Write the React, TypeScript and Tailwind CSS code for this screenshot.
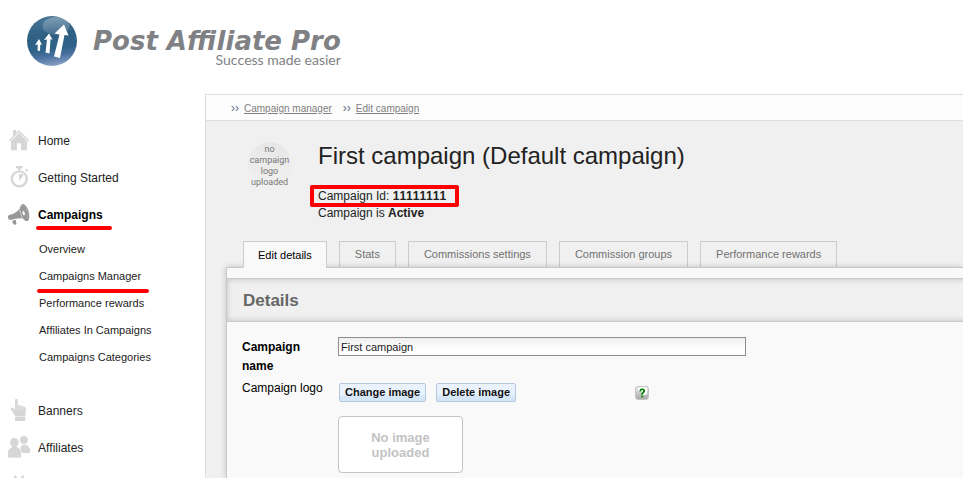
import type { ReactNode } from "react";

const GREY = "#d6d6d6";

function LogoMark() {
  return (
    <svg className="h-[52px] w-[52px] shrink-0" viewBox="0 0 52 52" aria-hidden="true">
      <defs>
        <linearGradient id="ball" x1="0.4" y1="0" x2="0.55" y2="1">
          <stop offset="0" stopColor="#4a7796" />
          <stop offset="0.35" stopColor="#306083" />
          <stop offset="0.65" stopColor="#2f6288" />
          <stop offset="0.8" stopColor="#4a71a0" />
          <stop offset="1" stopColor="#8aa3c4" />
        </linearGradient>
        <linearGradient id="shine" x1="0" y1="0" x2="0" y2="1">
          <stop offset="0" stopColor="#ffffff" stopOpacity="0.3" />
          <stop offset="1" stopColor="#ffffff" stopOpacity="0.1" />
        </linearGradient>
      </defs>
      <circle cx="26" cy="26" r="25" fill="url(#ball)" />
      <ellipse cx="30" cy="11" rx="13.500" ry="9" fill="url(#shine)" />
      <g fill="#ffffff">
        <path d="M13 24 L16 29.800 L14.300 29.600 L14 36 L11.500 35.500 L11.800 29.600 L9 30 Z" />
        <path d="M23 18.500 L26.500 24.500 L24.500 24.300 L23.500 38.500 L19.500 37.500 L21 24.500 L18 25 Z" />
        <path d="M38 9.500 L42.500 20.500 L38.500 20 L34 43 L28 41.500 L33.500 19.500 L28.500 18.500 Z" />
      </g>
    </svg>
  );
}

function Icon({ children, color = GREY }: { children: ReactNode; color?: string }) {
  return (
    <svg className="mb-[2px] h-6 w-6 shrink-0" viewBox="0 0 24 24" fill={color} aria-hidden="true">
      {children}
    </svg>
  );
}

const HomeIcon = () => (
  <Icon>
    <path d="M6 2h3.200v4L6 9z" />
    <path d="M12 2 1.700 12.600l.9.900L12 4l9.400 9.500.9-.9z" />
    <path d="M12 4.900 4 13v9.300h6v-7h4v7h6V13z" />
  </Icon>
);

const StopwatchIcon = () => (
  <Icon>
    <path d="M9 1h6.500v2.200h-2v2H11v-2H9z" />
    <path d="m18 5.200 1.800-1.600 1.500 1.700-1.600 1.500z" />
    <circle cx="12.300" cy="13.800" r="7.500" fill="none" stroke={GREY} strokeWidth="2.300" />
    <path d="M12 9h3.500l1 1.600-4.500 5.400z" />
  </Icon>
);

const MegaphoneIcon = () => (
  <Icon color="#979797">
    <path d="M.8 14.500 2 13c4.500-.8 7.500-2.500 10.500-6l3.300 9.500c-4.500-.6-8 .2-11.800 1.500l-2.500-.7z" />
    <path d="M12.500 7c.5-3 2-4.700 3.600-5 2.600.5 4.600 4 5.700 8 .9 3.800.6 8-1.200 9-1.600.5-3.300-.8-4.800-2.500z" />
    <path d="m5.500 18.500 3.200-.8.800 4.300-1.800.9-2.200-2z" />
    <path d="M13.800 7c.3-2 1.300-3.500 2.400-3.600 3.600 1.100 5.600 9.200 4 13.600" fill="none" stroke="#b4b4b4" strokeWidth="0.600" />
    <ellipse cx="16.700" cy="11.300" rx="1.100" ry="2.300" fill="#ffffff" transform="rotate(-14 16.700 11.300)" />
    <path d="m12.500 8 2.900 8.600" stroke="#dcdcdc" strokeWidth="0.600" />
  </Icon>
);

const HandIcon = () => (
  <Icon>
    <path d="M8 2c0-1.300 2.700-1.300 2.700 0v5.500c.8-.9 2.300-.6 2.600.4.900-.7 2.200-.2 2.400.8 1-.6 3 0 3 1.300v5.500L18 18.500H8.500L6.600 15.500 4 11.500c-.4-1.500.6-2.500 2-1.700L8 12z" />
    <path d="M8 19h10.300v4H8z" />
    <path d="M10.800 7.500V12M13.300 8v4.200M15.700 9v3.500" stroke="#f4f4f4" strokeWidth="0.500" />
  </Icon>
);

const PeopleIcon = () => (
  <Icon>
    <circle cx="17" cy="5" r="3.900" />
    <path d="M13.500 14c-.5-2 1.500-3.500 2.500-4.200h2.500c2.500.8 4.500 2.700 4.500 5.200v3h-8z" />
    <path d="M7.300 3a4.400 4.400 0 0 1 2.500 8l-.2 1c3 1.100 4.400 3 4.400 6v4.500H1V18c0-3 1.400-4.900 4.200-6L5 11a4.400 4.400 0 0 1 2.300-8z" />
  </Icon>
);

const CogIcon = () => (
  <Icon>
    <path d="m6.500 6.500 1-3h1.500l1.500 3h3l1.500-3h1.500l1 3 3.500 2v10h-18v-10z" />
  </Icon>
);

function NavItem({ icon, label, active, children }: { icon: ReactNode; label?: string; active?: boolean; children?: ReactNode }) {
  return (
    <li>
      <a
        href="#"
        className={
          active
            ? "relative flex h-[37px] items-center gap-[7px] pl-[7px] font-bold text-black"
            : "relative flex h-[37px] items-center gap-[7px] pl-[7px] text-[#222]"
        }
      >
        {icon}
        {label}
        {active && <span className="absolute bottom-[3px] left-9 h-1 w-[76px] rounded-full bg-[#f00]" />}
      </a>
      {children}
    </li>
  );
}

const subItems = ["Overview", "Campaigns Manager", "Performance rewards", "Affiliates In Campaigns", "Campaigns Categories"];
const tabs = ["Edit details", "Stats", "Commissions settings", "Commission groups", "Performance rewards"];

function ImageButton({ children }: { children: ReactNode }) {
  return (
    <button
      type="button"
      className="h-[19px] rounded-[2px] border border-[#b4c8e0] bg-linear-to-b from-[#eaf3fd] from-65% to-[#d5e6f8] to-70% px-[5px] text-[11px] leading-[17px] font-bold whitespace-nowrap text-[#111]"
    >
      {children}
    </button>
  );
}

export default function App() {
  return (
    <div className="flex h-screen flex-col overflow-hidden bg-white font-['Liberation_Sans',Arial,sans-serif] text-[12px] text-[#222] [font-kerning:none]">
      <header className="flex h-[94px] shrink-0 items-start gap-[15px] pt-[15px] pl-[26px] text-[#808184]">
        <LogoMark />
        <div className="flex flex-col items-end pt-[13px]">
          <span className="font-['DejaVu_Sans',Verdana,sans-serif] text-[26px] leading-[26px] font-bold whitespace-nowrap italic">
            Post Affiliate Pro
          </span>
          <span className="font-['Lato','Noto_Sans',sans-serif] text-[14px] leading-3">Success made easier</span>
        </div>
      </header>

      <div className="flex min-h-0 grow">
        <nav className="w-[205px] shrink-0 pt-7">
          <ul>
            <NavItem icon={<HomeIcon />} label="Home" />
            <NavItem icon={<StopwatchIcon />} label="Getting Started" />
            <NavItem icon={<MegaphoneIcon />} label="Campaigns" active>
              <ul className="pt-[3px] pb-[21px] pl-[39px] text-[11px]">
                {subItems.map((item) => (
                  <li key={item} className="relative flex h-[27px] items-center">
                    <a href="#">{item}</a>
                    {item === "Campaigns Manager" && (
                      <span className="absolute -bottom-[3px] -left-[2px] h-1 w-28 rounded-full bg-[#f00]" />
                    )}
                  </li>
                ))}
              </ul>
            </NavItem>
            <NavItem icon={<HandIcon />} label="Banners" />
            <NavItem icon={<PeopleIcon />} label="Affiliates" />
            <NavItem icon={<CogIcon />} />
          </ul>
        </nav>

        <main className="flex min-w-0 grow flex-col overflow-hidden border-t border-l border-[#dedede] bg-[#f0f0f0]">
          <div className="flex h-[26px] shrink-0 items-center gap-[5px] border-b border-[#dedede] bg-[#fcfcfc] pt-px pl-[25px] text-[10px] text-[#808080]">
            <span className="text-[12px] leading-3 text-[#666f80]">››</span>
            <a href="#" className="underline">Campaign manager</a>
            <span className="pl-[6px] text-[12px] leading-3 text-[#666f80]">››</span>
            <a href="#" className="underline">Edit campaign</a>
          </div>

          <section className="flex h-[120px] shrink-0 items-start gap-[27px] pt-[21px] pl-[42px]">
            <div className="flex h-[43px] w-[43px] flex-col items-center rounded-full bg-linear-to-b from-[#e7e7e7] to-[#f0f0f0] pt-[2px] text-center font-['Roboto',sans-serif] text-[9px] leading-[11px] text-[#777]">
              <span>no</span>
              <span>campaign</span>
              <span>logo</span>
              <span>uploaded</span>
            </div>
            <div>
              <h1 className="text-[24px] leading-[28px] whitespace-nowrap">First campaign (Default campaign)</h1>
              <div className="relative mt-[18px] leading-[17px]">
                <p>
                  Campaign Id: <b>11111111</b>
                </p>
                <p>
                  Campaign is <b>Active</b>
                </p>
                <span className="absolute -top-[3px] -left-2 h-[22px] w-[149px] rounded-[2px] border-4 border-[#f00]" />
              </div>
            </div>
          </section>

          <div className="flex shrink-0 gap-3 pl-[37px] text-[11px]" role="tablist">
            {tabs.map((tab, i) => (
              <button
                key={tab}
                type="button"
                role="tab"
                aria-selected={i === 0}
                className={
                  i === 0
                    ? "relative z-10 -mb-px h-[27px] border border-b-0 border-[#ccc] bg-[#f9f9f9] px-[14px] whitespace-nowrap text-black"
                    : "h-[26px] border border-b-0 border-[#ccc] px-[15px] whitespace-nowrap text-[#707070]"
                }
              >
                {tab}
              </button>
            ))}
          </div>

          <div className="ml-5 grow border-t border-l border-[#c8c8c8] bg-[#f9f9f9] pt-[10px] shadow-[0_0_6px_rgba(0,0,0,0.2)]">
            <h2 className="-mr-2 flex h-11 items-center border-y border-[#c8c8c8] bg-[#f0f0f0] pt-px pl-4 text-[17px] font-bold text-[#666] shadow-[inset_0_0_6px_rgba(0,0,0,0.2)]">
              Details
            </h2>
            <form className="grid grid-cols-[96px_1fr] pt-[15px] pl-[15px]">
              <label htmlFor="campaign-name" className="w-20 pt-px leading-[19px] font-bold text-black">
                Campaign name
              </label>
              <div>
                <input
                  id="campaign-name"
                  type="text"
                  defaultValue="First campaign"
                  className="block h-[19px] w-[408px] max-w-full border border-[#8e8e8e] bg-linear-to-b from-[#efefef] to-white to-70% px-[2px] text-[11px] text-[#222]"
                />
              </div>
              <span className="pt-[3px] leading-[19px] text-black">Campaign logo</span>
              <div className="pt-[7px]">
                <div className="flex h-[19px] items-center pl-px">
                  <div className="flex w-[296px] gap-[10px]">
                    <ImageButton>Change image</ImageButton>
                    <ImageButton>Delete image</ImageButton>
                  </div>
                  <button
                    type="button"
                    aria-label="Help"
                    className="flex h-[14px] w-[14px] items-center justify-center rounded-[3px] border border-[#c4c4c4] bg-linear-to-b from-[#e8e8e8] to-[#aaa]"
                  >
                    <svg className="h-3 w-3 shrink-0" viewBox="0 0 12 12" aria-hidden="true">
                      <path d="M4 4V3h1V2h3v1h1v2H8v1H7v1M6 9h1" fill="none" stroke="#ffffff" strokeWidth="4" />
                      <path d="M3.500 4.500V3L5 1.500h2.500L9 3v2L7.200 6.500v1.200H5.300V6L7 4.500V3H5.500v1.500zM5.300 8.500h2v2h-2z" fill="#078007" />
                    </svg>
                  </button>
                </div>
                <div className="mt-[14px] flex h-[57px] w-[125px] flex-col items-center justify-center rounded-[4px] border border-[#c4c4c4] bg-white text-[13px] leading-[15px] font-bold text-[#c3c3c3]">
                  <span>No image</span>
                  <span>uploaded</span>
                </div>
              </div>
            </form>
          </div>
        </main>
      </div>
    </div>
  );
}
